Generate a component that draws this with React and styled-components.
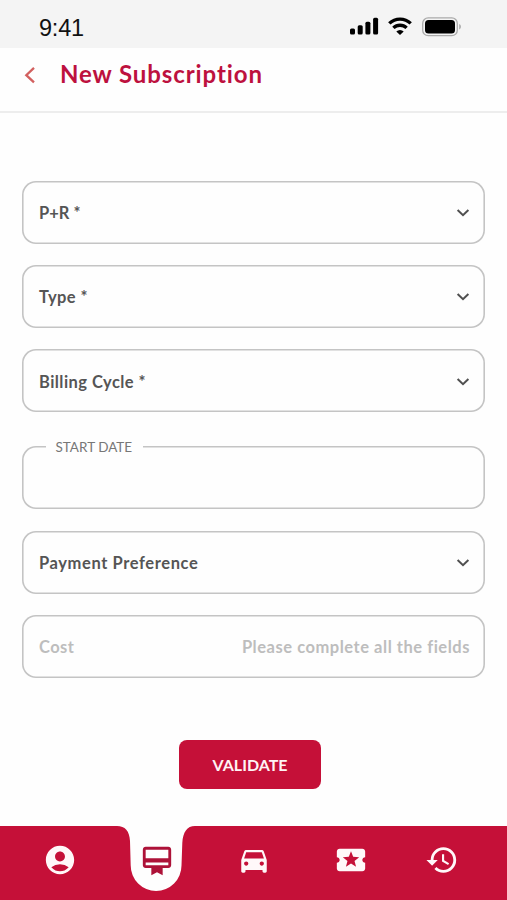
import React from 'react'
import styled, { createGlobalStyle } from 'styled-components'
import {
  MdAccountCircle,
  MdCardMembership,
  MdDirectionsCar,
  MdLocalPlay,
  MdHistory,
} from 'react-icons/md'

const GlobalStyle = createGlobalStyle`
  * {
    box-sizing: border-box;
  }
  body {
    margin: 0;
    background: #fefefe;
    font-family: Lato, "Liberation Sans", sans-serif;
  }
`

const selects = [
  { label: 'P+R *', spacing: '0px' },
  { label: 'Type *', spacing: '0.4px' },
  { label: 'Billing Cycle *', spacing: '0.45px' },
]

const Chevron = () => (
  <svg width="14" height="10" viewBox="0 0 14 10" fill="none">
    <path d="M1.6 2l5.4 5.2L12.4 2" stroke="#505050" strokeWidth="2" />
  </svg>
)

const App = () => {
  return (
    <Screen>
      <GlobalStyle />
      <StatusBar>
        <Time>9:41</Time>
        <StatusIcons>
          <svg width="29" height="18" viewBox="0 0 29 18" fill="#000">
            <rect x="0" y="11.5" width="5" height="6" rx="1.5" />
            <rect x="7.7" y="8.3" width="5" height="9.2" rx="1.5" />
            <rect x="15.4" y="4.7" width="5" height="12.8" rx="1.5" />
            <rect x="23.1" y="0.8" width="5" height="16.7" rx="1.5" />
          </svg>
          <svg width="24" height="18" viewBox="0 0 24 18" fill="none" stroke="#000" strokeWidth="3.4">
            <path d="M1.3 6.4a15.4 15.4 0 0 1 21.4 0" />
            <path d="M5.4 10.9a9.5 9.5 0 0 1 13.2 0" />
            <path d="M12 18l-3.7-3.6a5.3 5.3 0 0 1 7.4 0z" fill="#000" stroke="none" />
          </svg>
          <svg width="40" height="20" viewBox="0 0 40 20">
            <rect x="0.7" y="0.9" width="34.6" height="17.8" rx="5.5" fill="none" stroke="#aaa" strokeWidth="1.3" />
            <rect x="3" y="3.1" width="30" height="13.4" rx="3.5" fill="#000" />
            <path d="M37.2 7v5.4c2.3-1 2.3-4.4 0-5.4z" fill="#aaa" />
          </svg>
        </StatusIcons>
      </StatusBar>

      <Header>
        <BackButton aria-label="Back">
          <svg width="12" height="18" viewBox="0 0 12 18" fill="none">
            <path d="M10 1.8L2.3 9.2l7.7 7.2" stroke="#d2605f" strokeWidth="2.3" />
          </svg>
        </BackButton>
        <Title>New Subscription</Title>
      </Header>

      <Form>
        {selects.map((item) => (
          <Field key={item.label}>
            <Label $spacing={item.spacing}>{item.label}</Label>
            <Chevron />
          </Field>
        ))}
        <Field $top="13px">
          <Legend>START DATE</Legend>
        </Field>
        <Field>
          <Label $spacing="0.6px">Payment Preference</Label>
          <Chevron />
        </Field>
        <Field>
          <Label $muted $spacing="0.4px">Cost</Label>
          <Hint>Please complete all the fields</Hint>
        </Field>
        <Validate>VALIDATE</Validate>
      </Form>

      <NavBar>
        <NavItem><MdAccountCircle /></NavItem>
        <NavItem $active>
          <Notch width="78" height="66" viewBox="0 0 78 66">
            <path
              d="M0 0C8 0 12.5 5 13 15L13.7 39.5A25.4 25.4 0 0 0 64.5 39.5L65.3 17C66 6 70 0 78 0Z"
              fill="#fefefe"
            />
          </Notch>
          <MdCardMembership />
        </NavItem>
        <NavItem><MdDirectionsCar /></NavItem>
        <NavItem><MdLocalPlay /></NavItem>
        <NavItem><MdHistory /></NavItem>
      </NavBar>
    </Screen>
  )
}

const Screen = styled.div`
  display: flex;
  flex-direction: column;
  width: 507px;
  height: 900px;
  background: #fefefe;
  overflow: hidden;
`

const StatusBar = styled.div`
  display: flex;
  justify-content: space-between;
  height: 48px;
  padding: 0 45px 0 39px;
  background: #f4f4f4;
`

const Time = styled.div`
  padding-top: 14px;
  font-family: "Liberation Sans", Arial, sans-serif;
  font-size: 23.5px;
  line-height: 28px;
  letter-spacing: -0.2px;
  color: #111;
`

const StatusIcons = styled.div`
  display: flex;
  align-items: flex-start;
  gap: 9px;
  padding-top: 17px;

  svg:last-child {
    margin-left: 1px;
  }
`

const Header = styled.header`
  display: flex;
  align-items: flex-start;
  height: 65px;
  padding: 10px 24px;
  border-bottom: 2px solid #ededed;
`

const BackButton = styled.button`
  display: flex;
  width: 36px;
  padding: 8px 0 0;
  border: 0;
  background: none;
`

const Title = styled.h1`
  margin: 0;
  font-size: 24px;
  font-weight: 700;
  line-height: 32px;
  letter-spacing: 0.9px;
  color: #bd113e;
  white-space: nowrap;
`

const Form = styled.main`
  display: flex;
  flex-direction: column;
  flex: 1;
  gap: 21.3px;
  padding: 67.5px 22px 0;
`

const Field = styled.div`
  position: relative;
  display: flex;
  align-items: center;
  justify-content: space-between;
  height: 63px;
  margin-top: ${(props) => props.$top || '0'};
  padding: 2px 15px 0 17px;
  border-radius: 14px;
  box-shadow: inset 0 0 0 1.6px #c4c4c4;
`

const Label = styled.span`
  font-size: 16.5px;
  font-weight: 700;
  letter-spacing: ${(props) => props.$spacing};
  color: ${(props) => (props.$muted ? '#bdbdbd' : '#555')};
  white-space: nowrap;
`

const Hint = styled(Label)`
  letter-spacing: 0.53px;
  color: #bdbdbd;
`

/* sits on the top border of its field */
const Legend = styled.span`
  position: absolute;
  top: -8px;
  left: 24px;
  width: 97px;
  padding-left: 9.5px;
  background: #fefefe;
  font-size: 13.5px;
  line-height: 18px;
  color: #777;
  white-space: nowrap;
`

const Validate = styled.button`
  align-self: center;
  width: 142px;
  height: 49px;
  margin: 41px 0 0 -7px;
  padding: 0;
  border: 0;
  border-radius: 8px;
  background: #c51038;
  font-family: inherit;
  font-size: 16px;
  font-weight: 700;
  color: #fff3f5;
`

const NavBar = styled.nav`
  display: grid;
  grid-template-columns: repeat(4, 97px) 85px;
  flex: none;
  height: 74px;
  padding-left: 11.5px;
  background: #c51038;
`

const NavItem = styled.a`
  position: relative;
  display: flex;
  justify-content: center;
  padding-top: ${(props) => (props.$active ? '17.5px' : '16.5px')};
  font-size: 34px;
  color: ${(props) => (props.$active ? '#ad1238' : '#fff8f9')};

  svg {
    position: relative;
    flex: none;
  }
`

const Notch = styled.svg`
  && {
    position: absolute;
    top: 0;
    left: 50%;
    margin-left: -40px;
  }
`

export default App
